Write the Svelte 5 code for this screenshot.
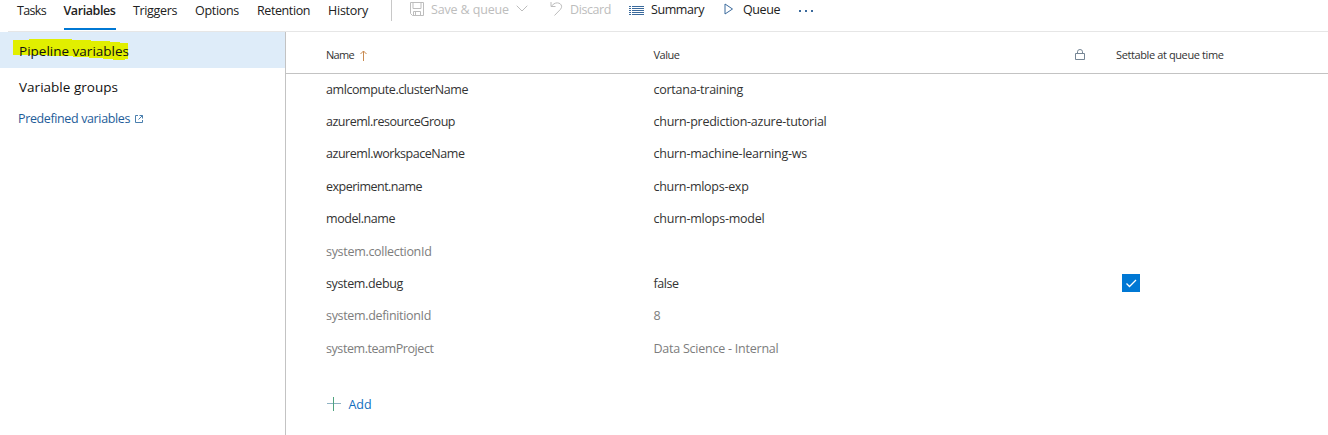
<script>
  const tabs = [
    { label: 'Tasks', left: 17, width: 29 },
    { label: 'Variables', left: 17.5, width: 52, active: true },
    { label: 'Triggers', left: 17.5, width: 44 },
    { label: 'Options', left: 18, width: 44 },
    { label: 'Retention', left: 18, width: 53 },
    { label: 'History', left: 18, width: 40 },
  ];

  const rows = [
    { name: 'amlcompute.clusterName', nw: 142, value: 'cortana-training', vw: 89.5 },
    { name: 'azureml.resourceGroup', nw: 129, value: 'churn-prediction-azure-tutorial', vw: 173 },
    { name: 'azureml.workspaceName', nw: 138.5, value: 'churn-machine-learning-ws', vw: 153.5 },
    { name: 'experiment.name', nw: 96, value: 'churn-mlops-exp', vw: 95 },
    { name: 'model.name', nw: 69, value: 'churn-mlops-model', vw: 111 },
    { name: 'system.collectionId', nw: 105.5, value: '', vw: 0, muted: true },
    { name: 'system.debug', nw: 77, value: 'false', vw: 25, settable: true },
    { name: 'system.definitionId', nw: 105, value: '8', vw: 7, muted: true },
    { name: 'system.teamProject', nw: 107.5, value: 'Data Science - Internal', vw: 125, muted: true },
  ];

  // Spreads or tightens the letters so that a label fills its allotted width.
  function fit(node, width) {
    const count = node.textContent.length;
    if (!count || !width) return;
    const natural = node.getBoundingClientRect().width;
    node.style.letterSpacing = `${(width - natural) / count}px`;
  }
</script>

<div class="page">
  <header>
    <nav>
      {#each tabs as tab}
        <div class="tab" class:active={tab.active} style:margin-left="{tab.left}px" style:width="{tab.width}px">
          <span use:fit={tab.width}>{tab.label}</span>
        </div>
      {/each}
    </nav>
    <div class="divider"></div>
    <div class="commands">
      <div class="cmd disabled save">
        <svg width="14" height="14" viewBox="0 0 14 14"><path d="M.5.5h13v13H2.5l-2-2zM3 .5v6h8v-6M3.5 13V9.5h7V13M5.5 10v3" /></svg>
        <span use:fit={78}>Save &amp; queue</span>
        <svg class="chevron" width="12" height="7" viewBox="0 0 12 7"><path d="M.7.7 6 6 11.3.7" /></svg>
      </div>
      <div class="cmd disabled discard">
        <svg width="13" height="14" viewBox="0 0 13 14"><path d="M1 0v4.5h4.5M1.2 4.3 4 1.8C8.5-1 14 3 10.5 7.3L4.5 13.5" /></svg>
        <span use:fit={41}>Discard</span>
      </div>
      <div class="cmd summary">
        <svg width="15" height="9" viewBox="0 0 15 9"><path d="M0 .5h2M3 .5h12M0 2.5h2M3 2.5h12M0 4.5h2M3 4.5h12M0 6.5h2M3 6.5h12M0 8.5h2M3 8.5h12" /></svg>
        <span use:fit={53}>Summary</span>
      </div>
      <div class="cmd queue">
        <svg width="10" height="12" viewBox="0 0 10 12"><path d="M1 1v10l7.5-5z" /></svg>
        <span use:fit={37}>Queue</span>
      </div>
      <div class="more"><i></i><i></i><i></i></div>
    </div>
  </header>

  <main>
    <aside>
      <div class="side selected">
        <svg class="marker" width="116" height="22" viewBox="0 0 116 22"><path d="M0 1h16V0h43v1h19v1h19v1h10v1h8v16h-3v1h-12v-1H90v-1H76v-1H60v-1H36v-1H0z" /></svg>
        <span use:fit={110}>Pipeline variables</span>
      </div>
      <div class="side second"><span use:fit={99}>Variable groups</span></div>
      <a class="predefined" href="#predefined">
        <span use:fit={112}>Predefined variables</span>
        <svg width="8" height="8" viewBox="0 0 8 8"><path d="M3 .5H.5v7h7V5M4.5.5h3v3M7.5.5 3.5 4.5" /></svg>
      </a>
    </aside>

    <section>
      <div class="grid head">
        <div class="cell">
          <span use:fit={28}>Name</span>
          <svg class="sort" width="8" height="11" viewBox="0 0 8 11"><path d="M4.5 11V1M1.5 4l3-3 3 3" /></svg>
        </div>
        <div class="cell"><span use:fit={26}>Value</span></div>
        <div class="cell">
          <svg class="lock" width="10" height="11" viewBox="0 0 10 11"><path d="M.5 4.5h9v6h-9zM2.5 4.5V2.8a2.5 2.3 0 0 1 5 0V4.5" /></svg>
        </div>
        <div class="cell"><span use:fit={107.5}>Settable at queue time</span></div>
      </div>
      <div class="body">
        {#each rows as row}
          <div class="grid row" class:muted={row.muted}>
            <div class="cell"><span use:fit={row.nw}>{row.name}</span></div>
            <div class="cell"><span use:fit={row.vw}>{row.value}</span></div>
            <div class="cell"></div>
            <div class="cell">
              {#if row.settable}
                <div class="check">
                  <svg width="18" height="18" viewBox="0 0 18 18"><path d="m4.5 9.5 3 3 6.5-6.5" /></svg>
                </div>
              {/if}
            </div>
          </div>
        {/each}
      </div>
      <div class="add">
        <svg width="14" height="14" viewBox="0 0 14 14"><path class="h" d="M0 6.5h14" /><path class="v" d="M6.5 0v14" /></svg>
        <span use:fit={23}>Add</span>
      </div>
    </section>
  </main>
</div>

<style>
  :global(body) { margin: 0; background: #fff; }
  .page {
    width: 1328px;
    height: 435px;
    overflow: hidden;
    display: flex;
    flex-direction: column;
    font-family: "Open Sans", "Noto Sans", sans-serif;
    font-size: 12.5px;
    line-height: 18px;
    color: #333;
    background: #fff;
  }
  span { white-space: nowrap; }
  svg { fill: none; stroke: currentColor; stroke-width: 1; flex: none; display: block; }
  header {
    height: 32px;
    box-sizing: border-box;
    display: flex;
    background: linear-gradient(#e6e6e6, #e6e6e6) 8px 31px / 100% 1px no-repeat;
  }
  nav { display: flex; color: #212121; }
  .tab { height: 30px; box-sizing: border-box; padding-top: 2px; }
  .tab.active { font-weight: 600; border-bottom: 2px solid #0078d4; color: #222; }
  .divider { width: 1px; height: 21px; background: #c8c8c8; margin-left: 23px; }
  .commands { display: flex; height: 18px; }
  .cmd { display: flex; align-items: center; height: 20px; color: #212121; }
  .cmd svg { color: #3b6a9c; }
  .cmd.disabled, .cmd.disabled svg { color: #bdbdbd; }
  .save { margin-left: 18px; }
  .save svg { margin-top: -2px; }
  .save span { margin-left: 7px; }
  .save .chevron { margin-left: 7px; margin-top: -3px; }
  .discard { margin-left: 22px; }
  .discard svg { margin-top: -2px; }
  .discard span { margin-left: 7px; }
  .summary { margin-left: 18px; }
  .summary svg { margin-top: 1px; }
  .summary span { margin-left: 7px; }
  .queue { margin-left: 20px; }
  .queue svg { margin-top: -2px; }
  .queue span { margin-left: 9px; }
  .more { display: flex; gap: 4px; margin: 10px 0 0 19px; }
  .more i { width: 2px; height: 2px; background: #3b6a9c; }
  main { flex: 1; display: flex; min-height: 0; }
  aside { width: 285px; border-right: 1px solid #c3c3c3; color: #111; }
  .side {
    position: relative;
    height: 36px;
    display: flex;
    align-items: center;
    padding-left: 19px;
    font-size: 13.5px;
  }
  .selected { background: #deecf9; padding-top: 1px; height: 35px; }
  .second { margin-top: 1px; }
  .side span { position: relative; }
  .marker { position: absolute; left: 13px; top: 7px; fill: #e1ef00; stroke: none; }
  .predefined {
    display: flex;
    align-items: center;
    height: 28px;
    padding-left: 18px;
    color: #1e5c99;
    text-decoration: none;
  }
  .predefined svg { margin-left: 5px; color: #4a7fae; }
  section { flex: 1; }
  .grid { display: grid; grid-template-columns: 327.5px 421.5px 41px 1fr; padding-left: 40px; }
  .cell { display: flex; align-items: center; }
  .head { height: 41px; border-bottom: 1px solid #c3c3c3; font-size: 11px; }
  .head .cell { height: 46px; }
  .sort { color: #c98a50; margin-left: 5px; }
  .lock { color: #758594; margin-top: -2px; }
  .body { margin-top: -0.6px; }
  .row { height: 32.4px; }
  .muted { color: #7d7d7d; }
  .check { width: 18px; height: 18px; background: #0078d4; color: #fff; margin: -1px 0 0 6px; }
  .check path { stroke-width: 1.3; }
  .add { display: flex; align-items: center; height: 18px; padding-left: 41px; margin-top: 30.6px; color: #106ebe; }
  .add svg { margin-top: -1px; }
  .add span { margin-left: 7.5px; }
  .add .h { stroke: #8fb3c4; }
  .add .v { stroke: #4fa37f; }
</style>
